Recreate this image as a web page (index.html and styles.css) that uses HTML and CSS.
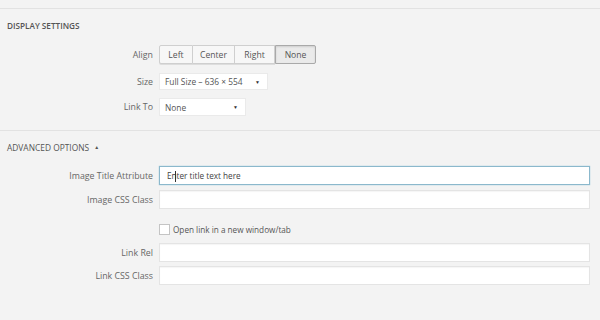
FILE: index.html
```html
<!DOCTYPE html>
<html lang="en">
<head>
    <meta charset="UTF-8">
    <title>Attachment Display Settings</title>
    <link rel="stylesheet" href="styles.css">
</head>
<body>
    <div class="settings">
        <section class="group">
            <h2>Display Settings</h2>
            <div class="row">
                <span class="label">Align</span>
                <div class="button-group">
                    <button class="btn btn-left">Left</button>
                    <button class="btn btn-center">Center</button>
                    <button class="btn btn-right">Right</button>
                    <button class="btn btn-none active">None</button>
                </div>
            </div>
            <div class="row row-size">
                <span class="label">Size</span>
                <div class="select select-size">
                    <span>Full Size – 636 × 554</span>
                    <span class="arrow">▼</span>
                </div>
            </div>
            <div class="row row-link">
                <span class="label">Link To</span>
                <div class="select select-link">
                    <span>None</span>
                    <span class="arrow">▼</span>
                </div>
            </div>
        </section>

        <section class="group advanced">
            <h2 class="toggle">Advanced Options <span class="up">▲</span></h2>
            <div class="row row-title">
                <span class="label">Image Title Attribute</span>
                <div class="input focus">
                    <span class="text">Enter title text here</span>
                    <span class="caret"></span>
                </div>
            </div>
            <div class="row row-input">
                <span class="label">Image CSS Class</span>
                <div class="input"></div>
            </div>
            <div class="row row-check">
                <span class="label"></span>
                <label class="check">
                    <span class="box"></span>
                    Open link in a new window/tab
                </label>
            </div>
            <div class="row row-rel">
                <span class="label">Link Rel</span>
                <div class="input"></div>
            </div>
            <div class="row row-input">
                <span class="label">Link CSS Class</span>
                <div class="input"></div>
            </div>
        </section>
    </div>
</body>
</html>
```

FILE: styles.css
```css
body {
    margin: 0;
    background-color: #f3f3f3;
    font-family: 'Open Sans', sans-serif;
    color: #666;
}

.settings {
    padding-top: 8px;
}

.group {
    border-top: 1px solid #e2e2e2;
    padding-right: 10px;
}

.group.advanced {
    margin-top: 14px;
}

h2 {
    margin: 0;
    padding: 11px 7px 0;
    font-size: 8.2px;
    line-height: 12px;
    font-weight: 600;
    text-transform: uppercase;
    color: #555;
}

h2.toggle {
    padding-top: 10px;
    font-weight: 400;
    font-size: 8.4px;
}

.up {
    font-size: 5px;
    vertical-align: 2px;
    margin-left: 3px;
}

.row {
    display: flex;
    align-items: center;
    margin-top: 10px;
}

.group > h2 + .row {
    margin-top: 13px;
}

.advanced > h2 + .row {
    margin-top: 12px;
}

.row-size {
    margin-top: 9px;
}

.row-link {
    margin-top: 8px;
}

.row-input {
    margin-top: 5px;
}

.row-check {
    margin-top: 11px;
    height: 19px;
}

.row-rel {
    margin-top: 4px;
}

.row-rel + .row-input {
    margin-top: 4px;
}

.label {
    flex: 0 0 153px;
    padding-right: 6px;
    text-align: right;
    font-size: 8.8px;
    color: #666;
}

/* button group */
.button-group {
    display: flex;
}

.btn {
    font-family: 'Open Sans', sans-serif;
    font-size: 8.6px;
    color: #555;
    background-color: #f7f7f7;
    border: 1px solid #cfcfcf;
    border-left: none;
    height: 19px;
    padding: 0;
    margin: 0;
    box-shadow: 0 1px 0 #ddd;
}

.btn-left {
    width: 34px;
    border-left: 1px solid #cfcfcf;
    border-radius: 2px 0 0 2px;
}

.btn-center {
    width: 42px;
}

.btn-right {
    width: 40px;
}

.btn-none {
    width: 41px;
    border-radius: 0 2px 2px 0;
}

.btn.active {
    background-color: #eaeaea;
    border: 1px solid #a9a9a9;
    box-shadow: inset 0 1px 2px rgba(0, 0, 0, 0.12);
}

/* selects */
.select {
    display: flex;
    justify-content: space-between;
    align-items: center;
    height: 17px;
    box-sizing: border-box;
    padding: 0 7px 0 5px;
    background-color: #fff;
    border: 1px solid #eaeaea;
    font-size: 8.4px;
    color: #555;
}

.select-size {
    width: 109px;
}

.select-link {
    width: 87px;
    height: 18px;
}

.arrow {
    font-size: 5px;
    color: #333;
}

/* text inputs */
.input {
    position: relative;
    flex: 1;
    height: 19px;
    box-sizing: border-box;
    background-color: #fff;
    border: 1px solid #e4e4e4;
    box-shadow: inset 0 1px 1px rgba(0, 0, 0, 0.04);
    display: flex;
    align-items: center;
    padding-left: 7px;
}

.input.focus {
    border-color: #8bb8cc;
    box-shadow: 0 0 1px rgba(30, 140, 190, 0.5);
}

.text {
    font-size: 8.2px;
    color: #444;
}

.caret {
    position: absolute;
    left: 15px;
    top: 4px;
    width: 1px;
    height: 11px;
    background-color: #333;
}

/* checkbox */
.check {
    display: flex;
    align-items: center;
    font-size: 8.2px;
    color: #555;
}

.box {
    width: 9px;
    height: 9px;
    background-color: #fff;
    border: 1px solid #c4c4c4;
    margin-right: 3px;
}
```
